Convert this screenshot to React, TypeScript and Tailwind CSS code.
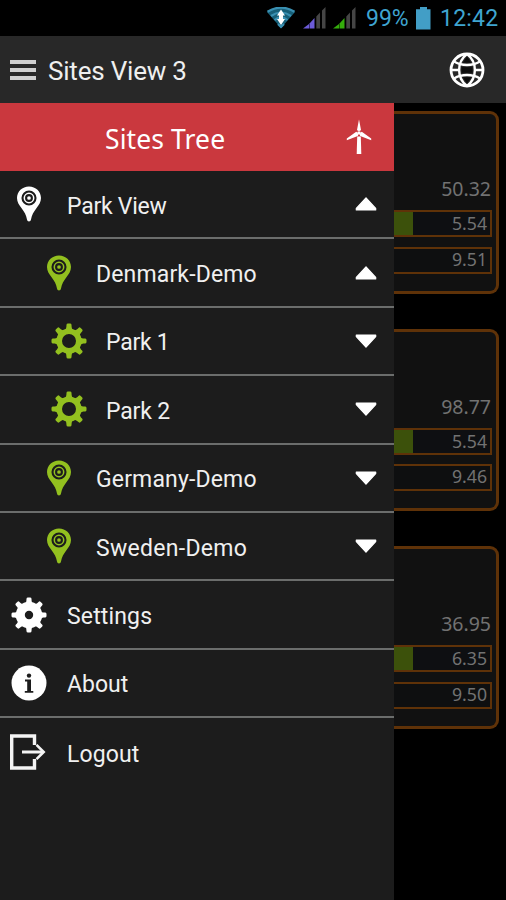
import type { ReactNode } from 'react';

const roboto = "font-['Roboto','Liberation_Sans',sans-serif]";
const noto = "font-['Noto_Sans','Open_Sans',sans-serif]";

function Pin({ className }: { className: string }) {
  return (
    <svg width="26" height="36" viewBox="0 0 26 36" className={className}>
      <path d="M13 .4C6.2.4 1 5.500 1 12c0 4 2.100 7 4.600 10.200 2.700 3.600 4.700 6.800 5.400 11.300.3 2.600 3.700 2.600 4 0 .7-4.500 2.700-7.700 5.400-11.300C22.900 19 25 16 25 12 25 5.500 19.800.4 13 .4Z" fill="currentColor" />
      <circle cx="13" cy="12" r="6.500" fill="none" stroke="#1c1c1c" strokeWidth="2.100" />
      <circle cx="13" cy="12" r="2.900" fill="none" stroke="#1c1c1c" strokeWidth="2.100" />
    </svg>
  );
}

function Gear({ hole, body, className }: { hole: number; body: number; className: string }) {
  return (
    <svg width="36" height="36" viewBox="-18 -18 36 36" className={className} fill="currentColor">
      {[0, 45, 90, 135, 180, 225, 270, 315].map((a) => (
        <path key={a} transform={`rotate(${a})`} d="M-4.600-10.500C-2.800-12-2.600-13.400-2.500-16.300Q-2.400-17.500-1-17.500H1Q2.400-17.500 2.500-16.300C2.600-13.400 2.800-12 4.600-10.500Z" />
      ))}
      <circle r={(body + hole) / 2} fill="none" stroke="currentColor" strokeWidth={body - hole} />
    </svg>
  );
}

function InfoIcon() {
  return (
    <svg width="36" height="36" viewBox="0 0 36 36">
      <circle cx="18" cy="18" r="17.500" fill="#fff" />
      <circle cx="18" cy="10.600" r="2.200" fill="#1c1c1c" />
      <path d="M14 14.600h6v11.400h2.300v1.800h-8.500V26h2.400v-9.600H14Z" fill="#1c1c1c" />
    </svg>
  );
}

function LogoutIcon() {
  return (
    <svg width="37" height="36" viewBox="0 0 37 36" fill="none" stroke="#f4f4f4" strokeWidth="3.400">
      <path d="M25.500 11V2H2.700v32h22.800V25" />
      <path d="M13 18h21" strokeWidth="3" />
      <path d="M27.500 10.800 34.700 18l-7.200 7.200" strokeWidth="2.600" />
    </svg>
  );
}

function Turbine() {
  return (
    <svg width="26" height="36" viewBox="0 0 26 36" fill="#fff">
      <path d="M13 .5 11 11a2.500 2.500 0 0 0 4 0Z" />
      <path d="M10.200 12.800.8 19.600v1.600l11-4.300c.8-1.400 0-3.400-1.600-4.100Z" />
      <path d="m15.800 12.800 9.400 6.800v1.600l-11-4.300c-.8-1.400 0-3.400 1.600-4.100Z" />
      <circle cx="13" cy="14" r="1.800" />
      <path d="M11.200 17.500h3.600l.5 17.500h-4.600Z" />
    </svg>
  );
}

function Globe() {
  return (
    <svg width="36" height="36" viewBox="0 0 36 36" fill="none" stroke="#fff" strokeWidth="2.400">
      <circle cx="18" cy="18" r="16" strokeWidth="2.800" />
      <path d="M18 2C7.500 10 7.500 26 18 34M18 2c10.500 8 10.500 24 0 32" />
      <path d="M5 9.500c7.500 4.600 18.500 4.600 26 0M5 26.500c7.500-4.600 18.500-4.600 26 0M2 18h8M26 18h8" />
      <path d="M12.500 15.200h11v5.600h-11Z" fill="#0c0c0c" stroke="none" />
      <path d="m18 4.500 4.200 6.300h-8.400ZM18 31.500l4.200-6.300h-8.400Z" fill="#0c0c0c" stroke="none" />
    </svg>
  );
}

function WifiIcon() {
  return (
    <svg width="30" height="22" viewBox="0 0 30 22" fill="none">
      <path d="M1 5Q15-4 29 5L15 21Z" fill="#175f78" />
      <path d="M1.500 4.700Q15-3.500 28.500 4.700M5 9Q15 2 25 9M8.500 13Q15 8 21.500 13M12 17l3 3 3-3" stroke="#3a90b2" strokeWidth="2.200" />
      <path d="m15 2.500 4 6h-8ZM15 18l-4-6h8Z" fill="#fff" />
      <path d="M13 7h4v6h-4Z" fill="#fff" />
    </svg>
  );
}

function Signal({ className }: { className: string }) {
  return (
    <svg width="23" height="22" viewBox="0 0 23 22" className={className}>
      <path d="M0 21.500 6 17v4.500Z" fill="currentColor" />
      <path d="M6.500 16.500 11.500 11v10.500h-5Z" fill="currentColor" />
      <path d="M13.300 9.500 17 5.500v16h-3.700ZM19 3.500 22.500 0v21.500H19Z" fill="#454545" />
    </svg>
  );
}

function Battery() {
  return (
    <svg width="15" height="23" viewBox="0 0 15 23" fill="#429ec6">
      <path d="M4 0h7v2.200h3.500v20.300H0V2.200h4Z" />
    </svg>
  );
}

function Triangle({ up }: { up: boolean }) {
  return (
    <svg width="22" height="14" viewBox="0 0 22 14" className={up ? '' : 'rotate-180'}>
      <path d="M11 .8 20.700 11.500V13H1.300V11.500Z" fill="#fff" stroke="#fff" strokeWidth="1.200" strokeLinejoin="round" />
    </svg>
  );
}

type RowProps = { icon: ReactNode; label: string; pad: string; text: string; arrow?: 'up' | 'down'; last?: boolean };

function Row({ icon, label, pad, text, arrow, last }: RowProps) {
  return (
    <li className={`flex h-[68.4px] items-center pr-[17px] ${pad} ${last ? '' : 'border-b-2 border-[#6b6d6c]'}`}>
      <span className="flex shrink-0 items-center">{icon}</span>
      <span className={`${text} grow pt-[5px] text-[23px] leading-7 whitespace-nowrap text-[#f0f0f0]`}>{label}</span>
      {arrow && <Triangle up={arrow === 'up'} />}
    </li>
  );
}

function Card({ total, first, second }: { total: string; first: string; second: string }) {
  return (
    <section className="flex h-[182.500px] flex-col rounded-r-[9px] border-[3px] border-l-0 border-[#5f3208] bg-[#111111] pr-1">
      <div className="mt-[61px] h-[35px] pr-px text-right text-[19.500px] leading-[28px]">{total}</div>
      <div className="flex h-[27px] border-2 border-l-0 border-[#5f3208] text-[17.700px] leading-[22px]">
        <span className="w-[19px] bg-[#3c510b]" />
        <span className="grow bg-[#0e0f12] pr-[3px] text-right">{first}</span>
      </div>
      <div className="mt-[9.500px] h-[27px] border-2 border-l-0 border-[#5f3208] bg-[#0e0f10] pr-[3px] text-right text-[17.700px] leading-[21px]">{second}</div>
    </section>
  );
}

export default function App() {
  return (
    <div className={`flex h-[900px] w-[506px] flex-col overflow-hidden bg-black ${roboto}`}>
      <div className="flex h-9 shrink-0 items-center pl-[266px] text-[23px] text-[#3fa5d1]">
        <WifiIcon />
        <Signal className="ml-[7px] text-[#6c5bd9]" />
        <Signal className="ml-[7px] text-[#35ad0c]" />
        <span className="ml-[10px] w-[44px] whitespace-nowrap pt-[2px]">99%</span>
        <span className="ml-[6px]"><Battery /></span>
        <span className="ml-[9px] whitespace-nowrap pt-[2px] tracking-[0.2px]">12:42</span>
      </div>
      <header className="flex h-[67px] shrink-0 items-center bg-[#282828] pr-[21px] pl-[10px]">
        <div className="flex w-[26px] flex-col gap-[4px]">
          <span className="h-[4px] bg-[#cfcfcf]" />
          <span className="h-[4px] bg-[#cfcfcf]" />
          <span className="h-[4px] bg-[#cfcfcf]" />
        </div>
        <h1 className="ml-[12px] grow pt-[3px] text-[26px] tracking-[-0.2px] text-[#efefef]">Sites View 3</h1>
        <Globe />
      </header>
      <div className="flex grow">
        <nav className="w-[394px] shrink-0 bg-[#1c1c1c]">
          <div className={`flex h-[68px] items-center bg-[#ca383e] pr-[22px] pl-[105px] ${noto}`}>
            <h2 className="grow pt-[5px] text-[26.500px] tracking-[0.1px] text-white">Sites Tree</h2>
            <Turbine />
          </div>
          <ul>
            <Row icon={<Pin className="text-white" />} label="Park View" pad="pl-[15.500px]" text="ml-[25.500px] tracking-[-0.250px]" arrow="up" />
            <Row icon={<Pin className="text-[#93c01f]" />} label="Denmark-Demo" pad="pl-[45.500px]" text="ml-[24.500px] tracking-[0.150px]" arrow="up" />
            <Row icon={<Gear body={12.6} hole={7} className="text-[#93c01f]" />} label="Park 1" pad="pl-[51px]" text="ml-[19px] tracking-[-0.250px]" arrow="down" />
            <Row icon={<Gear body={12.6} hole={7} className="text-[#93c01f]" />} label="Park 2" pad="pl-[51px]" text="ml-[19px] tracking-[-0.150px]" arrow="down" />
            <Row icon={<Pin className="text-[#93c01f]" />} label="Germany-Demo" pad="pl-[45.500px]" text="ml-[24.500px] tracking-[0.150px]" arrow="down" />
            <Row icon={<Pin className="text-[#93c01f]" />} label="Sweden-Demo" pad="pl-[45.500px]" text="ml-[24.500px] tracking-[0.300px]" arrow="down" />
            <Row icon={<Gear body={13.2} hole={4.2} className="text-white" />} label="Settings" pad="pl-[11px]" text="ml-[20px] tracking-[0.150px]" />
            <Row icon={<InfoIcon />} label="About" pad="pl-[11px]" text="ml-[20px]" />
            <Row icon={<LogoutIcon />} label="Logout" pad="pl-[9px]" text="ml-[21px] tracking-[0.100px]" last />
          </ul>
        </nav>
        <main className={`flex grow flex-col gap-[35px] pt-[8px] pr-[7px] text-[#727272] ${noto}`}>
          <Card total="50.32" first="5.54" second="9.51" />
          <Card total="98.77" first="5.54" second="9.46" />
          <Card total="36.95" first="6.35" second="9.50" />
        </main>
      </div>
    </div>
  );
}
